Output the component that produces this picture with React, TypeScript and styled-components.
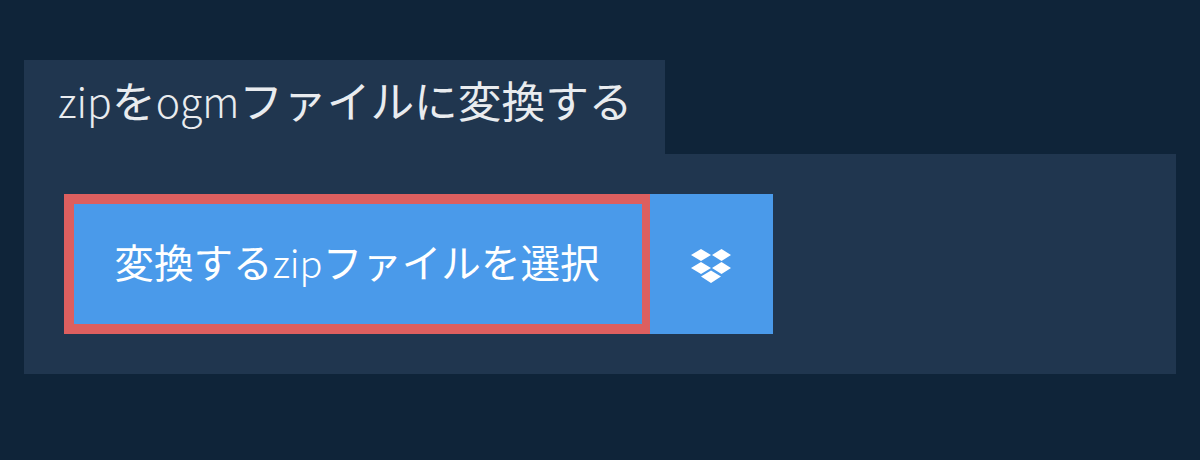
import React from "react";
import styled, { createGlobalStyle } from "styled-components";

const Global = createGlobalStyle`
  html, body { margin: 0; padding: 0; background: #0f2439; }
`;
const Page = styled.div`
  width: 1200px; height: 460px; box-sizing: border-box; padding: 60px 24px 0;
  background: #0f2439; font-family: "Noto Sans CJK JP", sans-serif; overflow: hidden;
`;
const Tab = styled.h1`
  margin: 0; display: inline-block; height: 94px; box-sizing: border-box; padding: 9px 32px 0 34px;
  background: #20364f; color: #e9ecef; font-size: 43.7px; font-weight: 400; line-height: 60px; vertical-align: top;
  white-space: nowrap;
`;
const Latin = styled.span<{ $size: number }>`
  font-size: ${(p) => p.$size}px;
  font-weight: 300;
`;
const Panel = styled.div`
  background: #20364f; padding: 40px; height: 220px; box-sizing: border-box; display: flex;
`;
const MainButton = styled.button`
  width: 586px; height: 140px; box-sizing: border-box; border: 10px solid #dd5f5f; border-right-width: 8px;
  background: #4a9aea; color: #fff; font: 400 39.6px/56px "Noto Sans CJK JP", sans-serif; padding: 0 2px 6px 0;
`;
const DropButton = styled.button`
  width: 123px; height: 140px; border: 0; background: #4a9aea; display: flex; align-items: center; justify-content: center; padding: 4px 2px 0 0;
`;
export default function App() {
  return (
    <Page>
      <Global />
      <Tab>
        <Latin $size={41}>zip</Latin>を<Latin $size={41}>ogm</Latin>ファイルに変換する
      </Tab>
      <Panel>
        <MainButton>
          変換する<Latin $size={38}>zip</Latin>ファイルを選択
        </MainButton>
        <DropButton>
          <svg width="40" height="34" viewBox="0 0 40 34" fill="#fff">
            <path d="M0 6 10 0l10 6-10 6zM21 6l9.500-6L40 6l-9.500 6zM0 19l10-6 10 6-10 6zM21 19l9.500-6 9.500 6-9.500 6zM10 27.500l10-6 10 6-10 6.500z" />
          </svg>
        </DropButton>
      </Panel>
    </Page>
  );
}
